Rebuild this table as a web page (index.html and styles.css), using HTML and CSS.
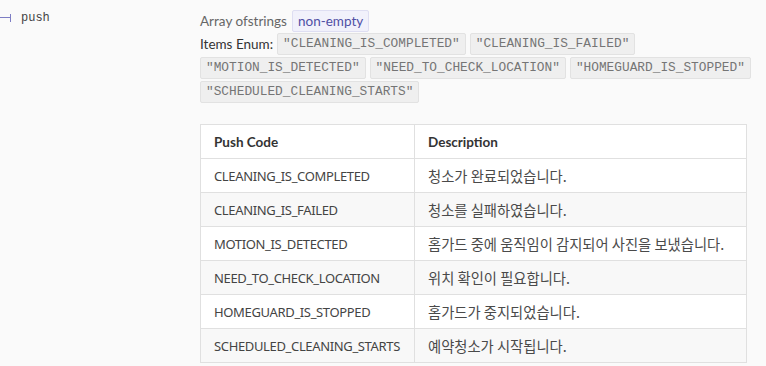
FILE: index.html
```html
<!DOCTYPE html>
<html>
<head>
<meta charset="utf-8">
<link rel="stylesheet" href="styles.css">
</head>
<body>
<div class="prop">
  <div class="prop-name">
    <span class="marker"></span>
    <span class="name">push</span>
  </div>
  <div class="prop-detail">
    <div class="type-line">
      <span class="type">Array ofstrings</span>
      <span class="badge">non-empty</span>
    </div>
    <div class="enum">
      <span class="enum-label">Items Enum:</span>
      <span class="chip">"CLEANING_IS_COMPLETED"</span>
      <span class="chip">"CLEANING_IS_FAILED"</span>
      <span class="chip">"MOTION_IS_DETECTED"</span>
      <span class="chip">"NEED_TO_CHECK_LOCATION"</span>
      <span class="chip">"HOMEGUARD_IS_STOPPED"</span>
      <span class="chip">"SCHEDULED_CLEANING_STARTS"</span>
    </div>
    <table class="codes">
      <colgroup><col class="c1"><col></colgroup>
      <thead>
        <tr><th>Push Code</th><th>Description</th></tr>
      </thead>
      <tbody>
        <tr><td>CLEANING_IS_COMPLETED</td><td>청소가 완료되었습니다.</td></tr>
        <tr><td>CLEANING_IS_FAILED</td><td>청소를 실패하였습니다.</td></tr>
        <tr><td>MOTION_IS_DETECTED</td><td>홈가드 중에 움직임이 감지되어 사진을 보냈습니다.</td></tr>
        <tr><td>NEED_TO_CHECK_LOCATION</td><td>위치 확인이 필요합니다.</td></tr>
        <tr><td>HOMEGUARD_IS_STOPPED</td><td>홈가드가 중지되었습니다.</td></tr>
        <tr><td>SCHEDULED_CLEANING_STARTS</td><td>예약청소가 시작됩니다.</td></tr>
      </tbody>
    </table>
  </div>
</div>
</body>
</html>
```
FILE: styles.css
```css
html, body {
  margin: 0;
  padding: 0;
  background: #fafafa;
}
body {
  font-family: Lato, "Noto Sans CJK KR", sans-serif;
  color: #333;
}
.prop {
  display: flex;
  padding-top: 10px;
}
.prop-name {
  width: 200px;
  flex: none;
  display: flex;
  align-items: flex-start;
  padding-top: 1px;
}
.marker {
  width: 10px;
  height: 8px;
  margin-top: 3px;
  border-right: 1px solid #7d7dc4;
  position: relative;
  flex: none;
}
.marker::before {
  content: "";
  position: absolute;
  left: 0;
  right: 0;
  top: 3px;
  height: 1px;
  background: #7d7dc4;
}
.name {
  font-family: "Liberation Mono", "Courier New", monospace;
  font-size: 12px;
  line-height: 14px;
  margin-left: 10px;
  color: #444;
}
.prop-detail {
  flex: 1;
  padding-right: 20px;
}
.type-line {
  display: flex;
  align-items: center;
  gap: 5px;
  font-size: 13.5px;
  height: 22px;
}
.type {
  color: #666;
}
.badge {
  background: #f1f1fb;
  border: 1px solid #dedef2;
  border-radius: 2px;
  color: #4f4fa5;
  padding: 0 5px;
  line-height: 20px;
  height: 20px;
}
.enum {
  display: flex;
  flex-wrap: wrap;
  align-items: center;
  column-gap: 4px;
  row-gap: 2px;
  margin-top: 1px;
  font-size: 13.5px;
  width: 560px;
}
.enum-label {
  color: #333;
}
.chip {
  font-family: "Liberation Mono", "Courier New", monospace;
  font-size: 12.8px;
  color: #757575;
  background: #efefef;
  border: 1px solid #e2e2e2;
  border-radius: 2px;
  padding: 0 5px;
  line-height: 20px;
  height: 20px;
}
.codes {
  border-collapse: collapse;
  table-layout: fixed;
  margin-top: 21px;
  width: 547px;
  font-family: "Noto Sans", "Noto Sans CJK KR", sans-serif;
  font-size: 13px;
  background: #fff;
}
.codes col.c1 {
  width: 214px;
}
.codes th, .codes td {
  border: 1px solid #e0e0e0;
  padding: 0 13px;
  height: 33px;
  text-align: left;
  white-space: nowrap;
  overflow: hidden;
}
.codes th {
  font-family: Lato, "Noto Sans CJK KR", sans-serif;
  font-size: 13.5px;
  font-weight: 700;
  color: #333;
}
.codes td {
  color: #444;
  letter-spacing: -0.35px;
}
.codes td + td {
  font-family: "Noto Sans CJK KR", sans-serif;
  font-size: 14.3px;
  letter-spacing: 0;
  color: #4a4a4a;
}
.codes tbody tr:nth-child(even) td {
  background: #f8f8f8;
}
```
